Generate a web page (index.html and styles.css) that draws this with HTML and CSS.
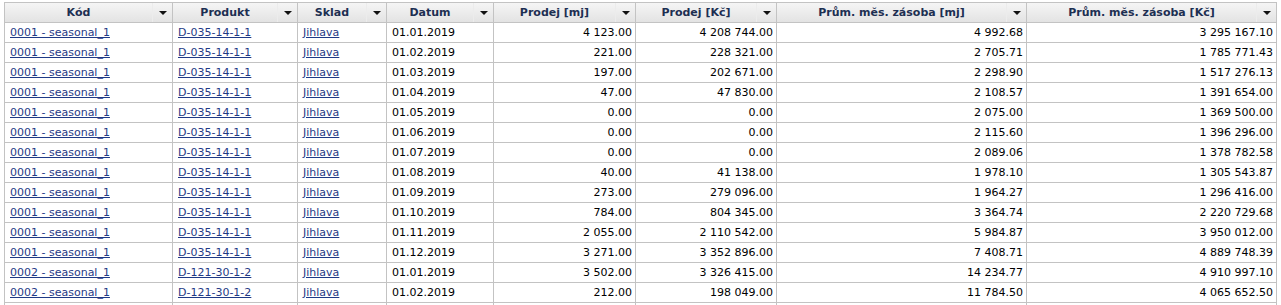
FILE: index.html
```html
<!DOCTYPE html>
<html lang="cs">
<head>
    <meta charset="UTF-8">
    <meta name="viewport" content="width=device-width, initial-scale=1.0">
    <title>Prodeje a zásoby</title>
    <link rel="stylesheet" href="styles.css">
</head>
<body>
    <table id="grid">
        <thead>
            <tr>
                <th class="c-kod"><div class="head"><span class="title">Kód</span><span class="menu"></span></div></th>
                <th class="c-produkt"><div class="head"><span class="title">Produkt</span><span class="menu"></span></div></th>
                <th class="c-sklad"><div class="head"><span class="title">Sklad</span><span class="menu"></span></div></th>
                <th class="c-datum"><div class="head"><span class="title">Datum</span><span class="menu"></span></div></th>
                <th class="c-num1"><div class="head"><span class="title">Prodej [mj]</span><span class="menu"></span></div></th>
                <th class="c-num2"><div class="head"><span class="title">Prodej [Kč]</span><span class="menu"></span></div></th>
                <th class="c-num3"><div class="head"><span class="title">Prům. měs. zásoba [mj]</span><span class="menu"></span></div></th>
                <th class="c-num4"><div class="head"><span class="title">Prům. měs. zásoba [Kč]</span><span class="menu"></span></div></th>
            </tr>
        </thead>
        <tbody id="rows"></tbody>
    </table>

    <script>
        const rowsElement = document.getElementById('rows');

        // kód, produkt, datum, prodej mj, prodej Kč, zásoba mj, zásoba Kč
        const data = [
            ['0001 - seasonal_1', 'D-035-14-1-1', '01.01.2019', '4 123.00', '4 208 744.00', '4 992.68', '3 295 167.10'],
            ['0001 - seasonal_1', 'D-035-14-1-1', '01.02.2019', '221.00', '228 321.00', '2 705.71', '1 785 771.43'],
            ['0001 - seasonal_1', 'D-035-14-1-1', '01.03.2019', '197.00', '202 671.00', '2 298.90', '1 517 276.13'],
            ['0001 - seasonal_1', 'D-035-14-1-1', '01.04.2019', '47.00', '47 830.00', '2 108.57', '1 391 654.00'],
            ['0001 - seasonal_1', 'D-035-14-1-1', '01.05.2019', '0.00', '0.00', '2 075.00', '1 369 500.00'],
            ['0001 - seasonal_1', 'D-035-14-1-1', '01.06.2019', '0.00', '0.00', '2 115.60', '1 396 296.00'],
            ['0001 - seasonal_1', 'D-035-14-1-1', '01.07.2019', '0.00', '0.00', '2 089.06', '1 378 782.58'],
            ['0001 - seasonal_1', 'D-035-14-1-1', '01.08.2019', '40.00', '41 138.00', '1 978.10', '1 305 543.87'],
            ['0001 - seasonal_1', 'D-035-14-1-1', '01.09.2019', '273.00', '279 096.00', '1 964.27', '1 296 416.00'],
            ['0001 - seasonal_1', 'D-035-14-1-1', '01.10.2019', '784.00', '804 345.00', '3 364.74', '2 220 729.68'],
            ['0001 - seasonal_1', 'D-035-14-1-1', '01.11.2019', '2 055.00', '2 110 542.00', '5 984.87', '3 950 012.00'],
            ['0001 - seasonal_1', 'D-035-14-1-1', '01.12.2019', '3 271.00', '3 352 896.00', '7 408.71', '4 889 748.39'],
            ['0002 - seasonal_1', 'D-121-30-1-2', '01.01.2019', '3 502.00', '3 326 415.00', '14 234.77', '4 910 997.10'],
            ['0002 - seasonal_1', 'D-121-30-1-2', '01.02.2019', '212.00', '198 049.00', '11 784.50', '4 065 652.50']
        ];

        function renderRows() {
            rowsElement.innerHTML = data.map(row => `
                <tr>
                    <td><a href="#">${row[0]}</a></td>
                    <td><a href="#">${row[1]}</a></td>
                    <td><a href="#">Jihlava</a></td>
                    <td>${row[2]}</td>
                    <td class="num">${row[3]}</td>
                    <td class="num">${row[4]}</td>
                    <td class="num">${row[5]}</td>
                    <td class="num">${row[6]}</td>
                </tr>`).join('');
            // next row is only just starting at the bottom edge
            rowsElement.innerHTML += '<tr>' + '<td></td>'.repeat(8) + '</tr>';
        }

        renderRows();
    </script>
</body>
</html>
```

FILE: styles.css
```css
body {
    margin: 0;
    padding: 2px 0 0 4px;
    background: #fff;
    font-family: "DejaVu Sans", Verdana, sans-serif;
    font-size: 11px;
    color: #000;
    overflow: hidden;
}
#grid {
    border-collapse: separate;
    border-spacing: 0;
    table-layout: fixed;
    width: 1273px;
}
#grid th,
#grid td {
    box-sizing: border-box;
    border-right: 1px solid #c3c3c3;
    border-bottom: 1px solid #c3c3c3;
    white-space: nowrap;
    overflow: hidden;
}
#grid th:first-child,
#grid td:first-child {
    border-left: 1px solid #c3c3c3;
}
#grid th {
    height: 20px;
    padding: 0;
    border-top: 1px solid #c3c3c3;
    background: linear-gradient(#f5f5f5, #e3e3e3);
    color: #1d2f52;
    font-weight: bold;
}
.c-kod { width: 169px; }
.c-produkt { width: 125px; }
.c-sklad { width: 89px; }
.c-datum { width: 107px; }
.c-num1 { width: 142px; }
.c-num2 { width: 141px; }
.c-num3 { width: 250px; }
.c-num4 { width: 250px; }
.head {
    display: flex;
    align-items: center;
    height: 19px;
}
.title {
    flex-grow: 1;
    text-align: center;
}
.menu {
    width: 20px;
    height: 19px;
    box-sizing: border-box;
    border-left: 1px solid #ececec;
    display: flex;
    justify-content: center;
    align-items: center;
}
.menu::after {
    content: "";
    border-left: 4px solid transparent;
    border-right: 4px solid transparent;
    border-top: 4px solid #111;
}
#grid td {
    height: 20px;
    padding: 0 3px 0 5px;
    vertical-align: middle;
}
#grid td.num {
    text-align: right;
}
#grid a {
    color: #1f3a86;
    text-decoration: underline;
}
```
